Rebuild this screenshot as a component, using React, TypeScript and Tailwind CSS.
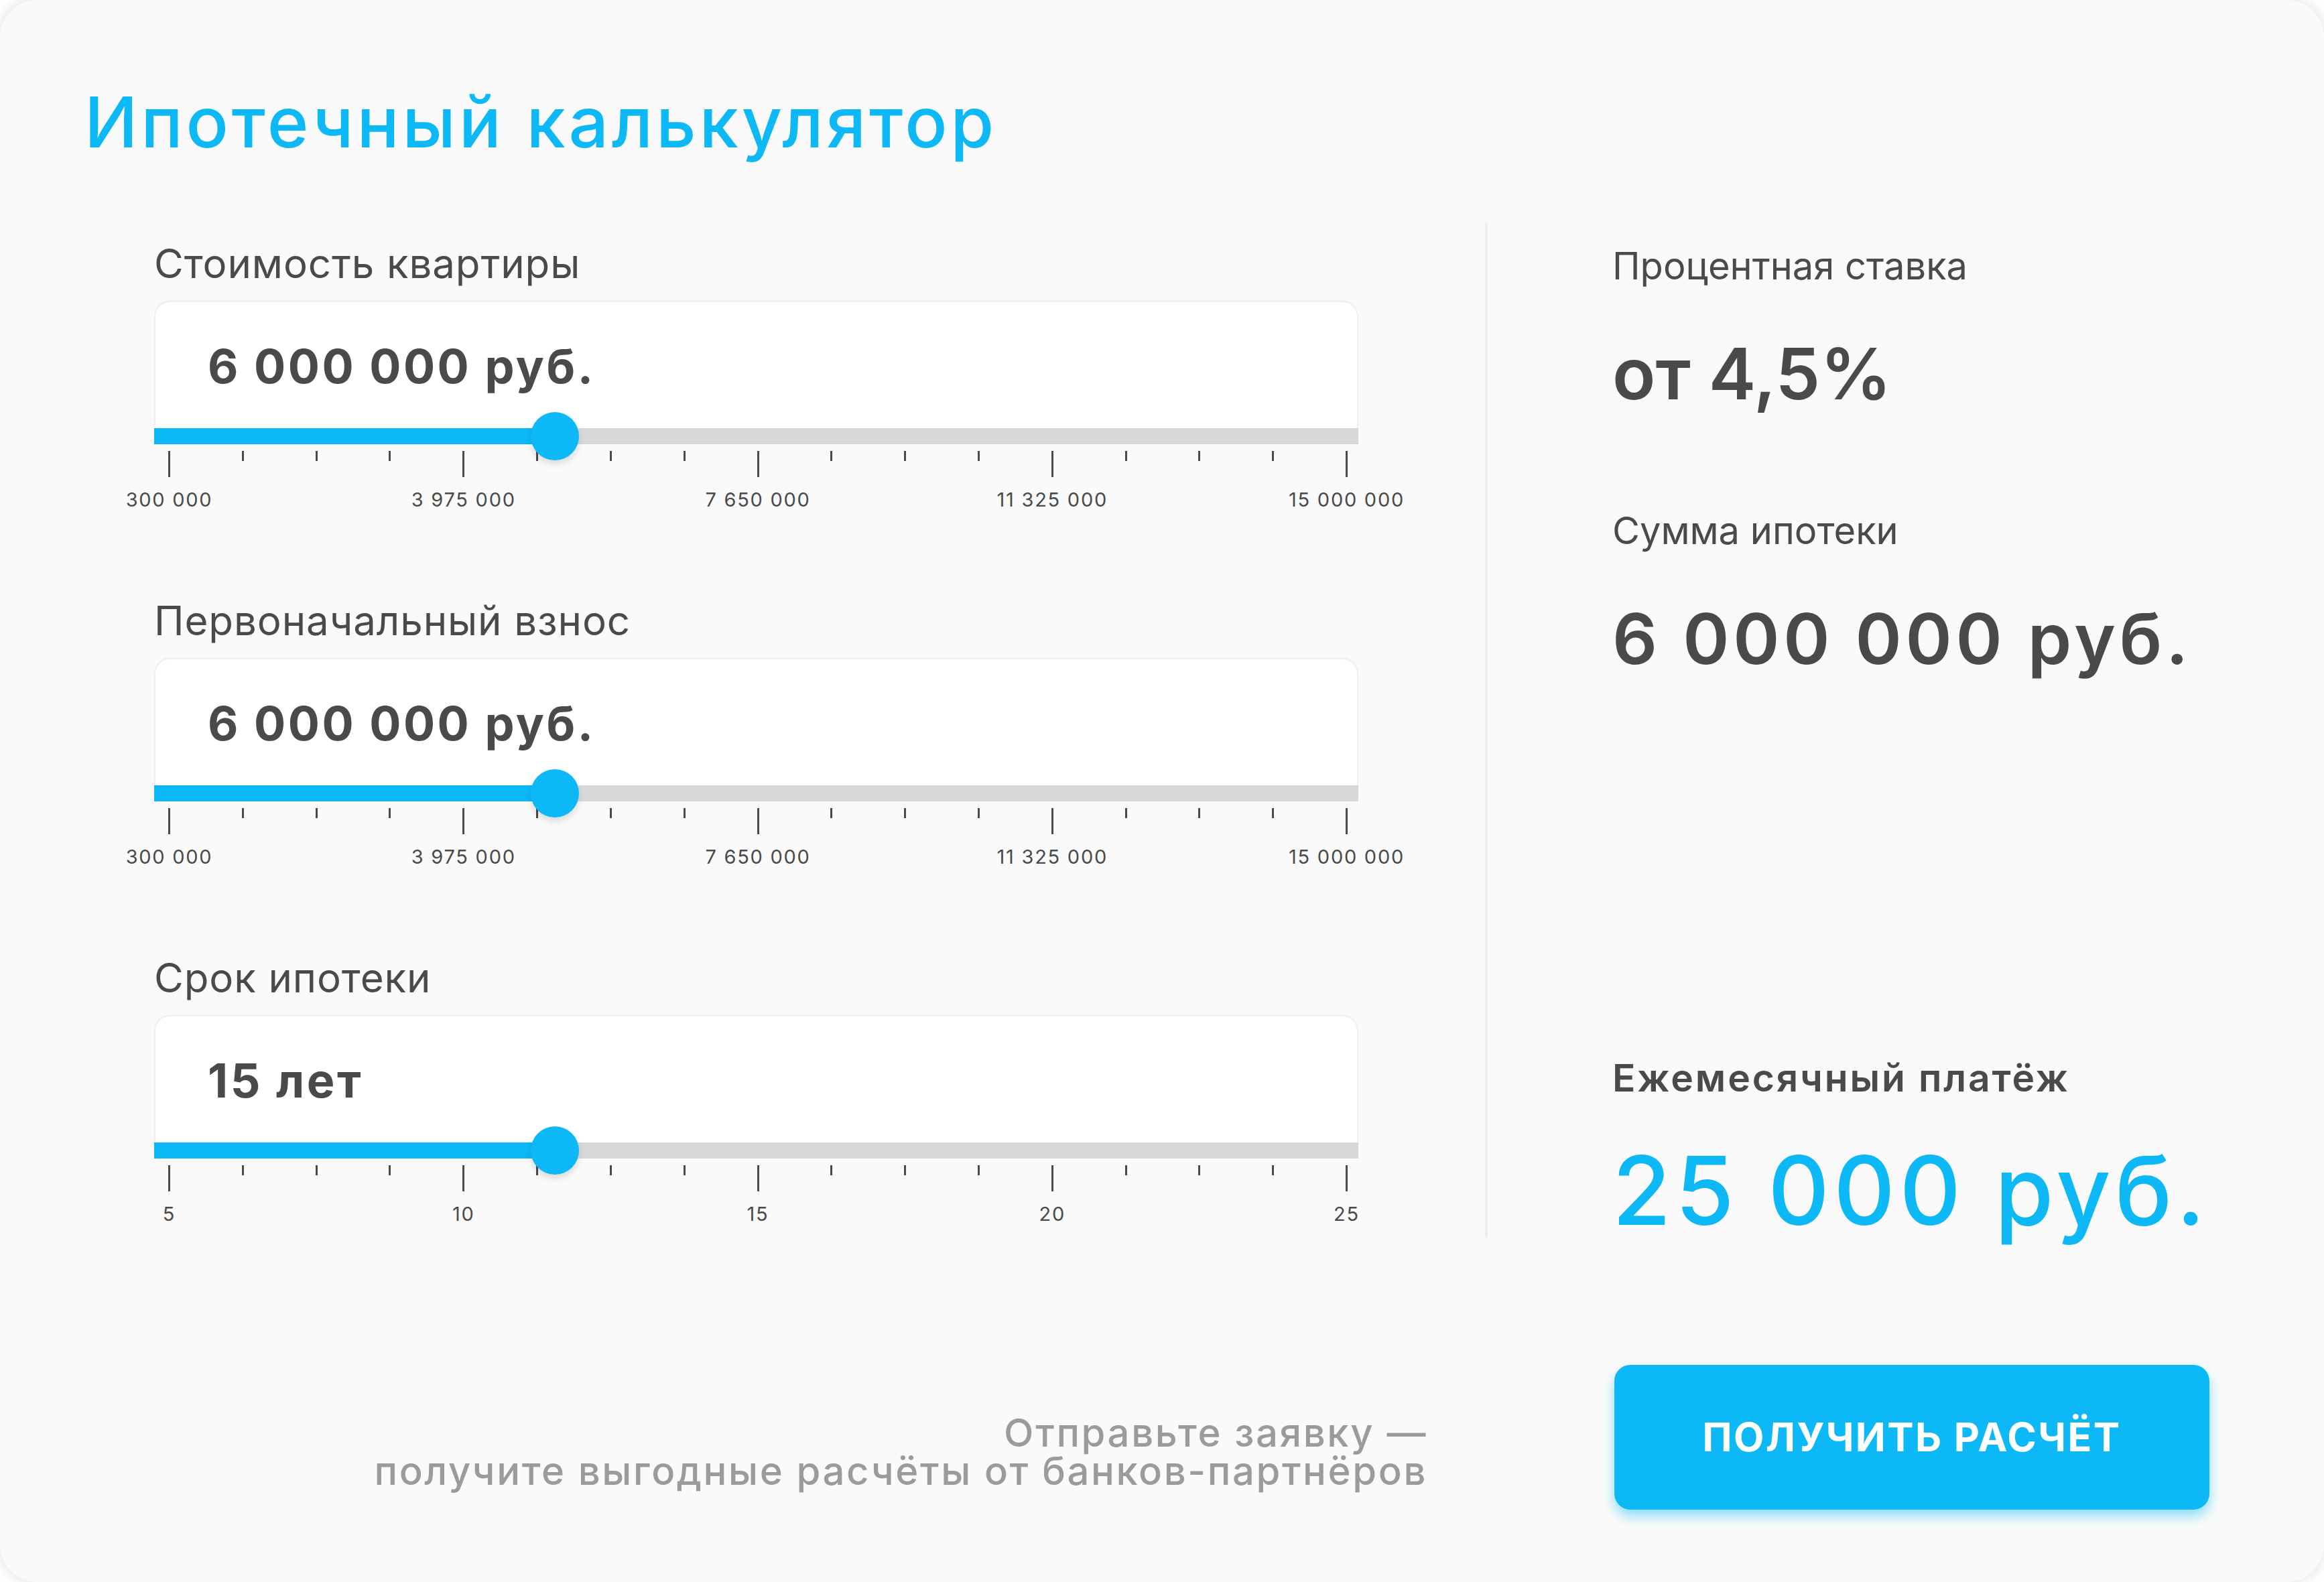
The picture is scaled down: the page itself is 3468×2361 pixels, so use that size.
const blue = 'bg-[#0cb8f5]'

type SliderProps = {
  label: string
  value: string
  marks: string[]
  last?: boolean
}

function Slider({ label, value, marks, last }: SliderProps) {
  const ticks = Array.from({ length: 17 }, (_, i) => i)
  return (
    <div className={last ? '' : 'h-[534px]'}>
      <div className="text-[60px] leading-none tracking-[0.015em] text-[#4a4a4a] -mt-[1px]">{label}</div>
      <div className="mt-[25px] h-[191px] bg-white rounded-t-[24px] border-x-2 border-t-[3px] border-[#f0f0f0] pl-[78px] pt-[61px]">
        <div className="text-[70px] leading-none font-bold tracking-[0.05em] text-[#4a4a4a]">{value}</div>
      </div>
      <div className="relative h-[24px] bg-[#d8d8d8]">
        <div className={`h-full w-[598px] ${blue}`} />
        <div className={`absolute left-[598px] top-1/2 -translate-x-1/2 -translate-y-1/2 w-[72px] h-[72px] rounded-full ${blue} shadow-[0_6px_10px_rgba(0,0,0,0.12)]`} />
      </div>
      <div className="mt-[10px] flex justify-between items-start pl-[21px] pr-[16px]">
        {ticks.map((i) => (
          <div key={i} className={`w-[3px] bg-[#4a4a4a] ${i % 4 === 0 ? 'h-[39px]' : 'h-[15px]'}`} />
        ))}
      </div>
      <div className="mt-[19px] flex justify-between pl-[21px] pr-[16px]">
        {marks.map((m) => (
          <div key={m} className="w-[3px] flex justify-center">
            <span className="whitespace-nowrap text-[29px] leading-none tracking-[0.06em] text-[#4a4a4a]">{m}</span>
          </div>
        ))}
      </div>
    </div>
  )
}

const money = ['300 000', '3 975 000', '7 650 000', '11 325 000', '15 000 000']

export default function App() {
  return (
    <div className="min-h-screen bg-white" style={{ fontFamily: 'Inter, "Noto Sans", sans-serif' }}>
      <div className="h-[2361px] w-full bg-[#fafafa] rounded-[56px] shadow-[0_0_22px_rgba(0,0,0,0.13)] overflow-hidden">
        <h1 className="pl-[126px] pt-[129px] text-[105px] leading-none font-medium tracking-[0.045em] text-[#0cb8f5]">
          Ипотечный калькулятор
        </h1>

        <div className="mt-[98px] flex items-start">
          <div className="ml-[230px] w-[1797px] pt-[32px]">
            <Slider label="Стоимость квартиры" value="6 000 000 руб." marks={money} />
            <Slider label="Первоначальный взнос" value="6 000 000 руб." marks={money} />
            <Slider label="Срок ипотеки" value="15 лет" marks={['5', '10', '15', '20', '25']} last />
          </div>

          <div className="ml-[189px] w-[4px] h-[1515px] bg-[#eeeeee]" />

          <div className="ml-[186px] pt-[37px] text-[#4a4a4a]">
            <div className="text-[56px] leading-none">Процентная ставка</div>
            <div className="mt-[80px] text-[106px] leading-none font-semibold">от 4,5%</div>
            <div className="mt-[153px] text-[56px] leading-none">Сумма ипотеки</div>
            <div className="mt-[80px] text-[105px] leading-none font-semibold tracking-[0.055em]">6 000 000 руб.</div>
            <div className="mt-[575px] text-[57px] leading-none font-semibold tracking-[0.05em]">Ежемесячный платёж</div>
            <div className="mt-[68px] text-[142px] leading-none font-medium tracking-[0.045em] text-[#0cb8f5]">25 000 руб.</div>
          </div>
        </div>

        <div className="mt-[190px] flex justify-end items-start pr-[171px] gap-[279px]">
          <p className="mt-[73px] text-right text-[58px] leading-[57px] font-medium tracking-[0.045em] text-[#9b9b9b]">
            Отправьте заявку —
            <br />
            получите выгодные расчёты от банков-партнёров
          </p>
          <button className={`w-[888px] h-[216px] rounded-[24px] ${blue} shadow-[0_10px_18px_rgba(12,184,245,0.45)] text-white text-[59px] font-bold tracking-[0.04em]`}>
            ПОЛУЧИТЬ РАСЧЁТ
          </button>
        </div>
      </div>
    </div>
  )
}
